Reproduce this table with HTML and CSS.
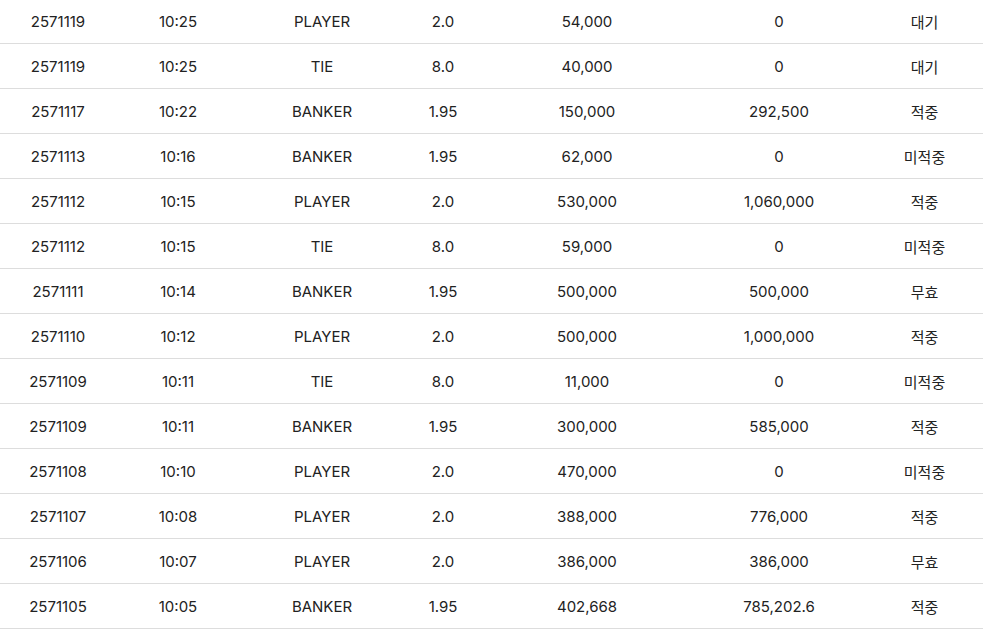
FILE: index.html
```html
<!DOCTYPE html>
<html lang="ko">
<head>
<meta charset="utf-8">
<link rel="stylesheet" href="styles.css">
</head>
<body>
<div class="table">
  <div class="row"><span>2571119</span><span>10:25</span><span>PLAYER</span><span>2.0</span><span>54,000</span><span>0</span><span>대기</span></div>
  <div class="row"><span>2571119</span><span>10:25</span><span>TIE</span><span>8.0</span><span>40,000</span><span>0</span><span>대기</span></div>
  <div class="row"><span>2571117</span><span>10:22</span><span>BANKER</span><span>1.95</span><span>150,000</span><span>292,500</span><span>적중</span></div>
  <div class="row"><span>2571113</span><span>10:16</span><span>BANKER</span><span>1.95</span><span>62,000</span><span>0</span><span>미적중</span></div>
  <div class="row"><span>2571112</span><span>10:15</span><span>PLAYER</span><span>2.0</span><span>530,000</span><span>1,060,000</span><span>적중</span></div>
  <div class="row"><span>2571112</span><span>10:15</span><span>TIE</span><span>8.0</span><span>59,000</span><span>0</span><span>미적중</span></div>
  <div class="row"><span>2571111</span><span>10:14</span><span>BANKER</span><span>1.95</span><span>500,000</span><span>500,000</span><span>무효</span></div>
  <div class="row"><span>2571110</span><span>10:12</span><span>PLAYER</span><span>2.0</span><span>500,000</span><span>1,000,000</span><span>적중</span></div>
  <div class="row"><span>2571109</span><span>10:11</span><span>TIE</span><span>8.0</span><span>11,000</span><span>0</span><span>미적중</span></div>
  <div class="row"><span>2571109</span><span>10:11</span><span>BANKER</span><span>1.95</span><span>300,000</span><span>585,000</span><span>적중</span></div>
  <div class="row"><span>2571108</span><span>10:10</span><span>PLAYER</span><span>2.0</span><span>470,000</span><span>0</span><span>미적중</span></div>
  <div class="row"><span>2571107</span><span>10:08</span><span>PLAYER</span><span>2.0</span><span>388,000</span><span>776,000</span><span>적중</span></div>
  <div class="row"><span>2571106</span><span>10:07</span><span>PLAYER</span><span>2.0</span><span>386,000</span><span>386,000</span><span>무효</span></div>
  <div class="row"><span>2571105</span><span>10:05</span><span>BANKER</span><span>1.95</span><span>402,668</span><span>785,202.6</span><span>적중</span></div>
</div>
</body>
</html>
```
FILE: styles.css
```css
html, body {
  margin: 0;
  padding: 0;
  background: #ffffff;
}
body {
  font-family: Inter, "Noto Sans CJK KR", sans-serif;
  font-size: 15px;
  color: #222222;
}
.table {
  width: 983px;
  margin-top: -1px;
}
.row {
  display: grid;
  grid-template-columns: 116px 124px 164px 78px 210px 174px 117px;
  height: 44px;
  border-bottom: 1px solid #dddddd;
  align-items: center;
  text-align: center;
}
```
